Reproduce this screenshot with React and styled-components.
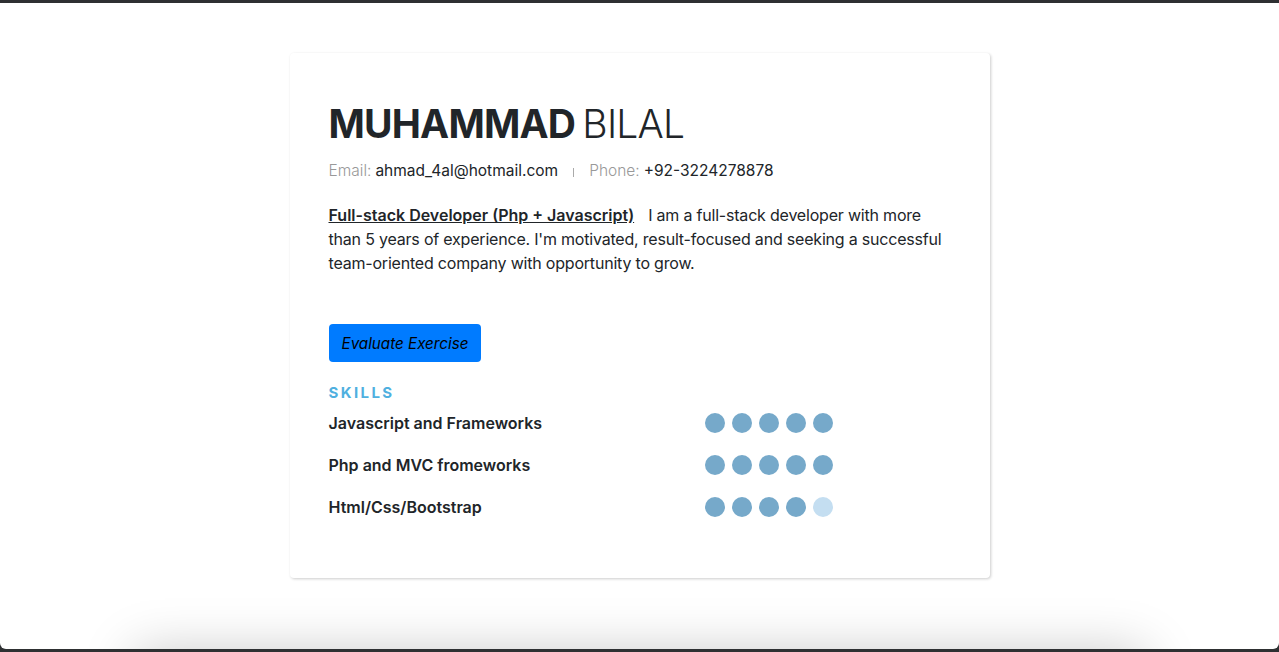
import React from 'react';
import styled, { createGlobalStyle } from 'styled-components';

const GlobalStyle = createGlobalStyle`
  html, body {
    margin: 0;
    padding: 0;
    background: #2e3032;
  }
  body {
    font-family: Inter, Roboto, "Helvetica Neue", Arial, sans-serif;
    color: #212529;
  }
`

const Window = styled.div`
  margin-top: 3px;
  height: 646px;
  background: #fff;
  border-radius: 0 0 6px 6px;
  overflow: hidden;
  display: flex;
  flex-direction: column;
  align-items: center;
`

const Card = styled.section`
  margin-top: 50px;
  width: 700px;
  box-sizing: border-box;
  padding: 43px 39px 61px;
  background: #fff;
  border-radius: 4px;
  box-shadow: 1px 1px 3px rgba(0, 0, 0, 0.2);
  flex-shrink: 0;
`

const Name = styled.h1`
  margin: 0;
  font-size: 39px;
  line-height: 56px;
  font-weight: 300;
  letter-spacing: -0.8px;
  word-spacing: -3px;
  color: #212529;

  b {
    font-weight: 700;
  }
`

const Contact = styled.div`
  margin-top: 7px;
  display: flex;
  align-items: center;
  font-size: 15.5px;
  line-height: 24px;
`

const Label = styled.span`
  color: #999;
  font-weight: 300;
  margin-right: 4px;
`

const Divider = styled.span`
  width: 1px;
  height: 9px;
  background: #aaa;
  margin: 2px 15px 0;
`

const About = styled.p`
  margin: 20px 0 0;
  font-size: 16px;
  line-height: 24px;
  letter-spacing: -0.2px;
  max-width: 615px;

  u {
    display: inline-block;
    font-weight: 600;
    letter-spacing: 0;
    margin-right: 14px;
  }
`

const Button = styled.button`
  margin-top: 49px;
  height: 38px;
  padding: 0 13px;
  border: none;
  border-radius: 4px;
  background: #007bff;
  color: #000;
  font-family: inherit;
  font-style: italic;
  font-size: 15.2px;
  cursor: pointer;
`

const Heading = styled.h3`
  margin: 20px 0 0;
  font-size: 15px;
  line-height: 22px;
  font-weight: 700;
  letter-spacing: 2.4px;
  color: #4fb0df;
`

const SkillList = styled.div`
  display: grid;
  grid-template-columns: 376px auto;
  row-gap: 22px;
  margin-top: 9px;
  align-items: center;
`

const SkillName = styled.div`
  font-size: 16px;
  font-weight: 600;
  line-height: 20px;
`

const Dots = styled.div`
  display: flex;
  gap: 7px;
`

const Dot = styled.span`
  width: 20px;
  height: 20px;
  border-radius: 50%;
  background: ${p => (p.$on ? '#76a9ca' : '#c4def1')};
`

const NextSection = styled.div`
  margin-top: 82px;
  width: 1010px;
  height: 200px;
  flex-shrink: 0;
  background: #fff;
  box-shadow: 0 -8px 50px rgba(0, 0, 0, 0.22);
`

const skills = [
  { name: 'Javascript and Frameworks', level: 5 },
  { name: 'Php and MVC fromeworks', level: 5 },
  { name: 'Html/Css/Bootstrap', level: 4 },
]

export default function App() {
  return (
    <>
      <GlobalStyle />
      <Window>
        <Card>
          <Name><b>MUHAMMAD</b> BILAL</Name>
          <Contact>
            <Label>Email:</Label>
            <span>ahmad_4al@hotmail.com</span>
            <Divider />
            <Label>Phone:</Label>
            <span>+92-3224278878</span>
          </Contact>
          <About>
            <u>Full-stack Developer (Php + Javascript)</u>
            I am a full-stack developer with more than 5 years of experience. I'm motivated,
            result-focused and seeking a successful team-oriented company with opportunity to grow.
          </About>
          <Button>Evaluate Exercise</Button>
          <Heading>SKILLS</Heading>
          <SkillList>
            {skills.map(s => (
              <React.Fragment key={s.name}>
                <SkillName>{s.name}</SkillName>
                <Dots>
                  {[1, 2, 3, 4, 5].map(i => (
                    <Dot key={i} $on={i <= s.level} />
                  ))}
                </Dots>
              </React.Fragment>
            ))}
          </SkillList>
        </Card>
        <NextSection />
      </Window>
    </>
  )
}
